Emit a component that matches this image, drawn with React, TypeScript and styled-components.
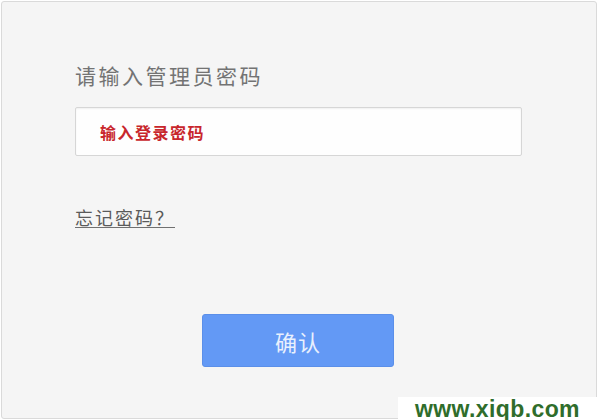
import React from "react";
import styled, { createGlobalStyle } from "styled-components";

const GlobalStyle = createGlobalStyle`
  html, body {
    margin: 0;
    padding: 0;
    background: #ffffff;
  }
  body {
    font-family: "Liberation Sans", "Noto Sans CJK SC", sans-serif;
  }
`;

const Page = styled.div`
  position: relative;
  width: 600px;
  height: 420px;
  overflow: hidden;
`;

const Panel = styled.section`
  box-sizing: border-box;
  margin: 1px 0 0 1px;
  width: 596px;
  height: 418px;
  border: 1px solid #dadada;
  border-radius: 3px;
  background: #f5f5f5;
  padding: 61px 0 0 73px;
  display: flex;
  flex-direction: column;
  font-family: "Noto Sans CJK SC", "Liberation Sans", sans-serif;
`;

const Title = styled.h2`
  margin: 0;
  font-size: 21px;
  line-height: 24px;
  font-weight: 400;
  letter-spacing: 2.5px;
  color: #737373;
`;

const PasswordBox = styled.div`
  box-sizing: border-box;
  margin-top: 20px;
  width: 447px;
  height: 49px;
  border: 1px solid #d6d6d6;
  border-radius: 2px;
  background: #fefefe;
  box-shadow: inset 0 1px 2px rgba(0, 0, 0, 0.06);
  display: flex;
  align-items: center;
  padding-left: 24px;
`;

const Hint = styled.span`
  font-size: 16px;
  font-weight: 700;
  letter-spacing: 1.5px;
  color: #c8262c;
`;

const ForgotLink = styled.a`
  align-self: flex-start;
  margin-top: 51px;
  font-size: 18px;
  line-height: 21px;
  letter-spacing: 2px;
  color: #5a5a5a;
  text-decoration: underline;
  text-decoration-color: #707070;
  text-underline-offset: 2px;
  cursor: pointer;
`;

const ConfirmButton = styled.button`
  box-sizing: border-box;
  align-self: flex-start;
  margin: 86px 0 0 127px;
  width: 192px;
  height: 53px;
  border: 1px solid #5b8fe9;
  border-radius: 3px;
  background: #6399f5;
  color: #e9f0fd;
  font-family: "Noto Sans CJK SC", sans-serif;
  font-size: 22px;
  letter-spacing: 1px;
  cursor: pointer;
`;

const Watermark = styled.div`
  position: absolute;
  right: 0;
  bottom: 0;
  width: 202px;
  height: 23px;
  background: #ffffff;
  padding-left: 17px;
  box-sizing: border-box;
  display: flex;
  align-items: center;
  font-family: "Liberation Sans", Arial, sans-serif;
  font-size: 23px;
  font-weight: 700;
  line-height: 20px;
  letter-spacing: 0.4px;
  color: #2f6d2b;
  white-space: nowrap;
`;

const App: React.FC = () => {
  return (
    <Page>
      <GlobalStyle />
      <Panel>
        <Title>请输入管理员密码</Title>
        <PasswordBox>
          <Hint>输入登录密码</Hint>
        </PasswordBox>
        <ForgotLink>忘记密码？</ForgotLink>
        <ConfirmButton>确认</ConfirmButton>
      </Panel>
      <Watermark>www.xiqb.com</Watermark>
    </Page>
  );
};

export default App;
